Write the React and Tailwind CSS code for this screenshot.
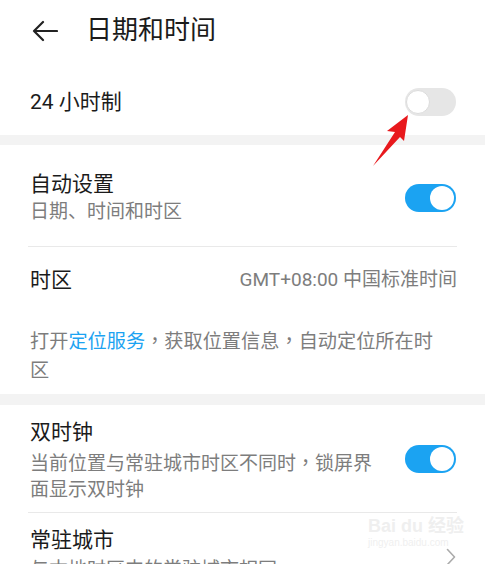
import React from 'react';

const font = { fontFamily: 'Roboto, "Noto Sans CJK SC", sans-serif' };

// centred full-width comma, as on the device
const Comma = () => <span style={{ fontFamily: '"Noto Sans CJK TC", sans-serif' }}>，</span>;

const Toggle = ({ on }) => (
  <div
    className={`relative w-[51px] h-[28px] rounded-full shrink-0 ${on ? 'bg-[#1ba3f2]' : 'bg-[#e6e6e6]'}`}
  >
    <div
      className={`absolute top-[2px] w-[24px] h-[24px] rounded-full bg-white ${on ? 'right-[2px]' : 'left-[1px] border border-[#dcdcdc]'}`}
    />
  </div>
);

const Divider = () => <div className="mx-[28px] h-px bg-[#e9e9e9]" />;

const Band = ({ h }) => <div className={`bg-[#f3f3f3] ${h}`} />;

export default function App() {
  return (
    <div className="relative w-[485px] h-[564px] overflow-hidden bg-white text-[#1b1b1b]" style={font}>
      {/* header */}
      <div className="h-[62px] flex items-center">
        <svg className="ml-[32px]" width="26" height="22" viewBox="0 0 26 22" fill="none" stroke="#222" strokeWidth="2.2" strokeLinecap="round" strokeLinejoin="round">
          <path d="M25 11H2M11 2 2 11l9 9" />
        </svg>
        <div className="ml-[28px] text-[26px] leading-[34px] mt-[-2px]">日期和时间</div>
      </div>

      {/* 24 hour */}
      <div className="h-[73px] pt-[6px] flex items-center justify-between pl-[30px] pr-[29px]">
        <span className="text-[21px] leading-[28px]">24 小时制</span>
        <Toggle on={false} />
      </div>

      <Band h="h-[10px]" />

      {/* auto */}
      <div className="h-[101px] pt-[5px] flex items-center justify-between pl-[30px] pr-[29px]">
        <div>
          <div className="text-[21px] leading-[28px]">自动设置</div>
          <div className="text-[19px] leading-[28px] text-[#7d7d7d]">日期、时间和时区</div>
        </div>
        <Toggle on />
      </div>

      <Divider />

      <div className="h-[66px] flex items-center justify-between pl-[30px] pr-[28px]">
        <span className="text-[21px] leading-[28px]">时区</span>
        <span className="text-[19px] leading-[28px] text-[#7d7d7d]">GMT+08:00 中国标准时间</span>
      </div>

      <div className="h-[81px] pt-[13px] pl-[30px] pr-[40px] text-[19.2px] leading-[29px] text-[#7d7d7d]">
        打开<span className="text-[#1ba3f2]">定位服务</span><Comma />获取位置信息<Comma />自动定位所在时区
      </div>

      <Band h="h-[11px]" />

      {/* dual clock */}
      <div className="h-[107px] pt-[13px] flex justify-between pl-[30px] pr-[29px]">
        <div className="w-[355px]">
          <div className="text-[21px] leading-[28px]">双时钟</div>
          <div className="mt-[3px] h-[52px] text-[19px] leading-[26px] text-[#7d7d7d]">
            当前位置与常驻城市时区不同时<Comma />锁屏界面显示双时钟
          </div>
        </div>
        <div className="mt-[27px]">
          <Toggle on />
        </div>
      </div>

      <Divider />

      <div className="pt-[13px] flex justify-between pl-[30px] pr-[28px]">
        <div>
          <div className="text-[21px] leading-[28px]">常驻城市</div>
          <div className="mt-[3px] text-[19px] leading-[26px] text-[#7d7d7d]">与本地时区内的常驻城市相同</div>
        </div>
        <svg className="mt-[22px] mr-[1px]" width="10" height="18" viewBox="0 0 10 18" fill="none" stroke="#ababab" strokeWidth="1.6" strokeLinecap="round" strokeLinejoin="round">
          <path d="M1.5 1.5 8.5 9l-7 7.5" />
        </svg>
      </div>

      {/* watermark */}
      <div className="absolute left-[368px] top-[516px] text-[#efefef] pointer-events-none">
        <div className="text-[18px] leading-[20px] font-bold" style={{ fontFamily: '"Liberation Sans", "Noto Sans CJK SC", sans-serif' }}>
          Bai du 经验
        </div>
        <div className="text-[10px] leading-[14px]" style={{ fontFamily: '"Liberation Sans", sans-serif' }}>
          jingyan.baidu.com
        </div>
      </div>

      {/* red arrow */}
      <svg className="absolute left-0 top-0 pointer-events-none" width="485" height="564">
        <polygon points="408,115 387,131 395,132 373,166 400,137 404,141" fill="#e8191d" />
      </svg>
    </div>
  );
}
